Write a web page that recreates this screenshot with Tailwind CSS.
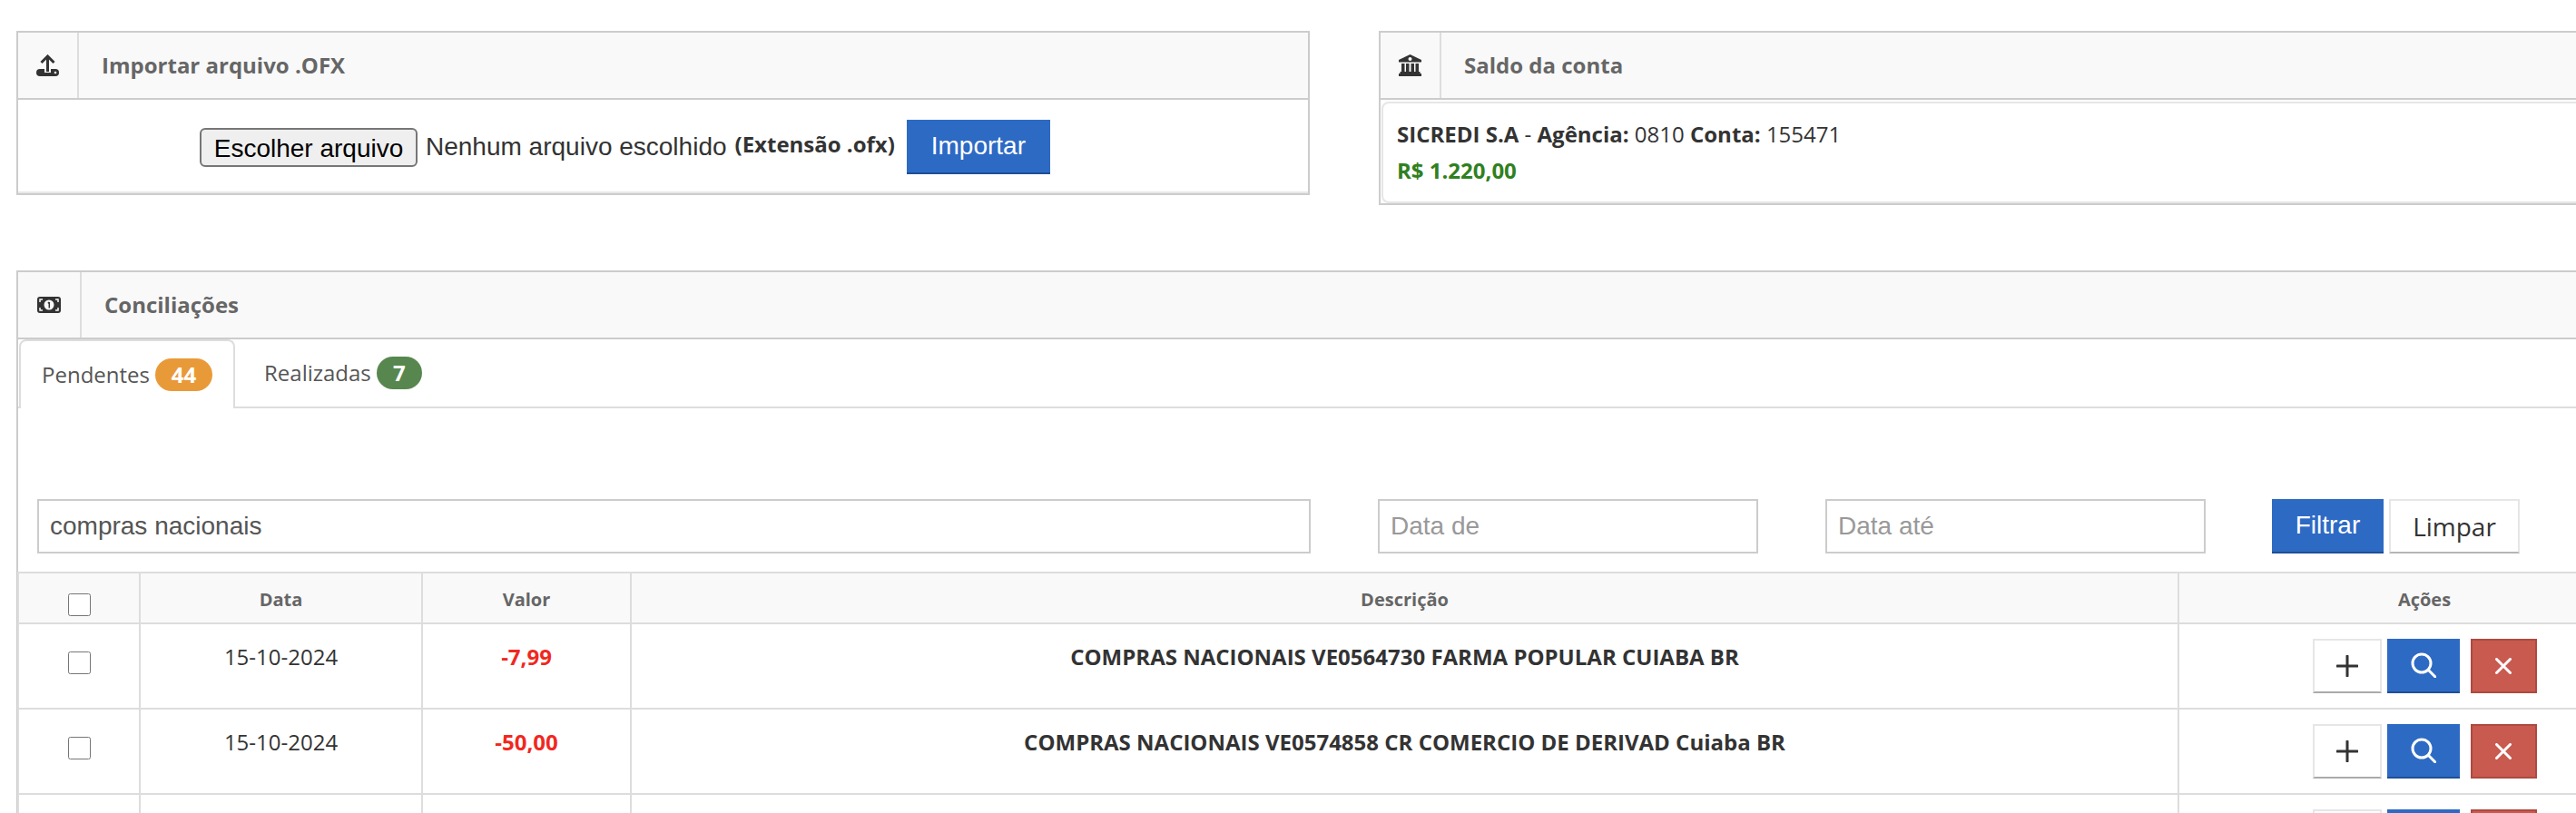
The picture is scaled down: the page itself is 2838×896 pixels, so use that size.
<!DOCTYPE html>
<html lang="pt-BR">
<head>
    <meta charset="UTF-8">
    <meta name="viewport" content="width=device-width, initial-scale=1.0">
    <title>Conciliação bancária</title>
    <script src="https://cdn.jsdelivr.net/npm/@tailwindcss/browser@4"></script>
</head>
<body class="bg-white w-[2838px] h-[896px] overflow-hidden font-['Open_Sans',sans-serif] text-[24px] text-[#333]">
    <div class="w-[2945px] h-[896px] overflow-hidden pt-[34px] pl-[18px]">

        <!-- Top cards -->
        <div class="flex items-start gap-[76px] h-[192px]">
            <section class="w-[1425px] h-[181px] border-2 border-[#ccc] shrink-0">
                <header class="flex h-[74px] bg-[#f9f9f9] border-b-2 border-[#ccc]">
                    <div class="w-[67px] flex items-center justify-center border-r-2 border-[#ddd]">
                        <svg width="25" height="24" viewBox="0 0 25 24">
                            <rect x="0" y="16" width="25" height="8" rx="4" fill="#333"/>
                            <path d="M12.5 14V20" stroke="#f9f9f9" stroke-width="7"/>
                            <path d="M12.5 19V3M5.5 9L12.5 2L19.5 9" fill="none" stroke="#333" stroke-width="3"/>
                            <circle cx="21" cy="20" r="1.3" fill="#f9f9f9"/>
                        </svg>
                    </div>
                    <h2 class="pl-[25px] flex items-center font-bold text-[#666] text-[24px]">Importar arquivo .OFX</h2>
                </header>
                <div class="h-[103px] border-b-2 border-[#e8e8e8] flex items-center pl-[200px] pt-[3px]">
                    <button class="h-[43px] w-[240px] bg-[#efefef] border-2 border-[#767676] rounded-[6px] font-['Liberation_Sans',sans-serif] text-[28px] text-black">Escolher arquivo</button>
                    <span class="ml-[9px] font-['Liberation_Sans',sans-serif] text-[28px]">Nenhum arquivo escolhido</span>
                    <b class="ml-[9px] text-[24px] -mt-[6px]">(Extensão .ofx)</b>
                    <button class="ml-[13px] w-[158px] h-[60px] bg-[#2d6ac4] border-b-2 border-[#1f4f96] text-white font-['Liberation_Sans',sans-serif] text-[28px]">Importar</button>
                </div>
            </section>

            <section class="w-[1427px] h-[192px] border-2 border-[#ccc] shrink-0">
                <header class="flex h-[74px] bg-[#f9f9f9] border-b-2 border-[#ccc]">
                    <div class="w-[67px] flex items-center justify-center border-r-2 border-[#ddd]">
                        <svg width="25" height="24" viewBox="0 0 25 24" fill="#333">
                            <path d="M12.5 0L25 6V8.5H0V6Z"/>
                            <circle cx="12.5" cy="5" r="2" fill="#f9f9f9"/>
                            <rect x="3" y="10" width="3.5" height="9"/>
                            <rect x="8" y="10" width="3.5" height="9"/>
                            <rect x="13.5" y="10" width="3.5" height="9"/>
                            <rect x="18.5" y="10" width="3.5" height="9"/>
                            <rect x="1.5" y="19" width="22" height="2"/>
                            <rect x="0" y="21" width="25" height="3"/>
                        </svg>
                    </div>
                    <h2 class="pl-[25px] flex items-center font-bold text-[#666] text-[24px]">Saldo da conta</h2>
                </header>
                <div class="h-[112px] mx-[1px] mt-[2px] border-2 border-[#e6e6e6] rounded-[8px] pl-[15px] pt-[14px]">
                    <p class="leading-[40px]"><b>SICREDI S.A</b> - <b>Agência:</b> 0810 <b>Conta:</b> 155471</p>
                    <p class="leading-[40px] font-bold text-[#2f8020]">R$ 1.220,00</p>
                </div>
            </section>
        </div>

        <!-- Conciliacoes -->
        <section class="mt-[72px] border-2 border-[#ccc] h-[700px]">
            <header class="flex h-[74px] bg-[#f9f9f9] border-b-2 border-[#ccc]">
                <div class="w-[70px] flex items-center justify-center border-r-2 border-[#ddd]">
                    <svg width="26" height="18" viewBox="0 0 26 18">
                        <rect width="26" height="18" rx="3" fill="#333"/>
                        <circle cx="13" cy="9" r="5.5" fill="#f9f9f9"/>
                        <path d="M13.3 6V12.5M11.8 7.3L13.3 6" stroke="#333" stroke-width="1.5" fill="none"/>
                        <path d="M3 6V3H6M23 6V3H20M3 12V15H6M23 12V15H20" stroke="#f9f9f9" stroke-width="1.5" fill="none"/>
                    </svg>
                </div>
                <h2 class="pl-[25px] flex items-center font-bold text-[#666] text-[24px]">Conciliações</h2>
            </header>

            <ul class="flex h-[76px] pl-[1px] border-b-2 border-[#ddd]">
                <li class="w-[238px] h-[76px] pl-[23px] flex items-center gap-[6px] bg-white border-2 border-b-0 border-[#ddd] rounded-t-[8px] text-[#555]">
                    Pendentes
                    <span class="w-[63px] h-[36px] rounded-full bg-[#e99a38] text-white font-bold text-[24px] flex items-center justify-center">44</span>
                </li>
                <li class="pl-[32px] flex items-center gap-[6px] h-[74px] text-[#555]">
                    Realizadas
                    <span class="w-[50px] h-[36px] rounded-full bg-[#57874f] text-white font-bold text-[24px] flex items-center justify-center">7</span>
                </li>
            </ul>

            <div class="flex mt-[100px] pl-[21px] h-[60px] items-start">
                <input type="text" value="compras nacionais" class="w-[1403px] h-[60px] border-2 border-[#ccc] px-[12px] font-['Liberation_Sans',sans-serif] text-[28px] text-[#555]">
                <input type="text" placeholder="Data de" class="ml-[74px] w-[419px] h-[60px] border-2 border-[#ccc] px-[12px] font-['Liberation_Sans',sans-serif] text-[28px] placeholder:text-[#999]">
                <input type="text" placeholder="Data até" class="ml-[74px] w-[419px] h-[60px] border-2 border-[#ccc] px-[12px] font-['Liberation_Sans',sans-serif] text-[28px] placeholder:text-[#999]">
                <button class="ml-[73px] w-[123px] h-[60px] bg-[#2d6ac4] border-b-2 border-[#1f4f96] text-white font-['Liberation_Sans',sans-serif] text-[28px]">Filtrar</button>
                <button class="ml-[6px] w-[144px] h-[60px] bg-white border-2 border-[#e6e6e6] border-b-[#b5b5b5] text-[#333] text-[28px]">Limpar</button>
            </div>

            <table class="mt-[20px] -ml-[1px] w-[2922px] table-fixed">
                <colgroup>
                    <col class="w-[134px]">
                    <col class="w-[311px]">
                    <col class="w-[230px]">
                    <col class="w-[1705px]">
                    <col class="w-[542px]">
                </colgroup>
                <thead>
                    <tr class="h-[56px] bg-[#f9f9f9] text-[#666] text-[20px] font-bold">
                        <th class="border-2 border-[#ddd] pt-[12px]"><input type="checkbox" class="w-[25px] h-[25px] align-middle"></th>
                        <th class="border-2 border-[#ddd] pt-[4px]">Data</th>
                        <th class="border-2 border-[#ddd] pt-[4px]">Valor</th>
                        <th class="border-2 border-[#ddd] pt-[4px]">Descrição</th>
                        <th class="border-2 border-[#ddd] pt-[4px]">Ações</th>
                    </tr>
                </thead>
                <tbody class="text-center">
                    <tr class="h-[94px] align-top">
                        <td class="border-2 border-[#ddd] pt-[30px]"><input type="checkbox" class="w-[25px] h-[25px] block mx-auto"></td>
                        <td class="border-2 border-[#ddd] pt-[18px]">15-10-2024</td>
                        <td class="border-2 border-[#ddd] pt-[18px] font-bold text-[#f0281e]">-7,99</td>
                        <td class="border-2 border-[#ddd] pt-[18px] font-bold">COMPRAS NACIONAIS VE0564730 FARMA POPULAR CUIABA BR</td>
                        <td class="border-2 border-[#ddd] pt-[16px]">
                            <div class="flex justify-center">
                                <button class="w-[76px] h-[60px] bg-white border-2 border-[#e6e6e6] border-b-[#aaa] flex items-center justify-center">
                                    <svg width="24" height="24" viewBox="0 0 24 24"><path d="M12 1V23M1 12H23" stroke="#333" stroke-width="3" stroke-linecap="round"/></svg>
                                </button>
                                <button class="ml-[6px] w-[80px] h-[60px] bg-[#2d6ac4] border-b-2 border-[#1f4f96] flex items-center justify-center">
                                    <svg width="28" height="28" viewBox="0 0 28 28" fill="none" stroke="white" stroke-width="3" stroke-linecap="round"><circle cx="12" cy="12" r="10"/><path d="M19.5 19.5L27 27"/></svg>
                                </button>
                                <button class="ml-[12px] w-[73px] h-[60px] bg-[#c95a4f] border-2 border-[#ad4a40] flex items-center justify-center">
                                    <svg width="18" height="18" viewBox="0 0 18 18"><path d="M1.5 1.5L16.5 16.5M16.5 1.5L1.5 16.5" stroke="white" stroke-width="3" stroke-linecap="round"/></svg>
                                </button>
                            </div>
                        </td>
                    </tr>
                    <tr class="h-[94px] align-top">
                        <td class="border-2 border-[#ddd] pt-[30px]"><input type="checkbox" class="w-[25px] h-[25px] block mx-auto"></td>
                        <td class="border-2 border-[#ddd] pt-[18px]">15-10-2024</td>
                        <td class="border-2 border-[#ddd] pt-[18px] font-bold text-[#f0281e]">-50,00</td>
                        <td class="border-2 border-[#ddd] pt-[18px] font-bold">COMPRAS NACIONAIS VE0574858 CR COMERCIO DE DERIVAD Cuiaba BR</td>
                        <td class="border-2 border-[#ddd] pt-[16px]">
                            <div class="flex justify-center">
                                <button class="w-[76px] h-[60px] bg-white border-2 border-[#e6e6e6] border-b-[#aaa] flex items-center justify-center">
                                    <svg width="24" height="24" viewBox="0 0 24 24"><path d="M12 1V23M1 12H23" stroke="#333" stroke-width="3" stroke-linecap="round"/></svg>
                                </button>
                                <button class="ml-[6px] w-[80px] h-[60px] bg-[#2d6ac4] border-b-2 border-[#1f4f96] flex items-center justify-center">
                                    <svg width="28" height="28" viewBox="0 0 28 28" fill="none" stroke="white" stroke-width="3" stroke-linecap="round"><circle cx="12" cy="12" r="10"/><path d="M19.5 19.5L27 27"/></svg>
                                </button>
                                <button class="ml-[12px] w-[73px] h-[60px] bg-[#c95a4f] border-2 border-[#ad4a40] flex items-center justify-center">
                                    <svg width="18" height="18" viewBox="0 0 18 18"><path d="M1.5 1.5L16.5 16.5M16.5 1.5L1.5 16.5" stroke="white" stroke-width="3" stroke-linecap="round"/></svg>
                                </button>
                            </div>
                        </td>
                    </tr>
                    <tr class="h-[94px] align-top">
                        <td class="border-2 border-[#ddd]"></td>
                        <td class="border-2 border-[#ddd]"></td>
                        <td class="border-2 border-[#ddd]"></td>
                        <td class="border-2 border-[#ddd]"></td>
                        <td class="border-2 border-[#ddd] pt-[16px]">
                            <div class="flex justify-center">
                                <button class="w-[76px] h-[60px] bg-white border-2 border-[#e6e6e6] border-b-[#aaa]"></button>
                                <button class="ml-[6px] w-[80px] h-[60px] bg-[#2d6ac4] border-b-2 border-[#1f4f96]"></button>
                                <button class="ml-[12px] w-[73px] h-[60px] bg-[#c95a4f] border-2 border-[#ad4a40]"></button>
                            </div>
                        </td>
                    </tr>
                </tbody>
            </table>
        </section>
    </div>
</body>
</html>
